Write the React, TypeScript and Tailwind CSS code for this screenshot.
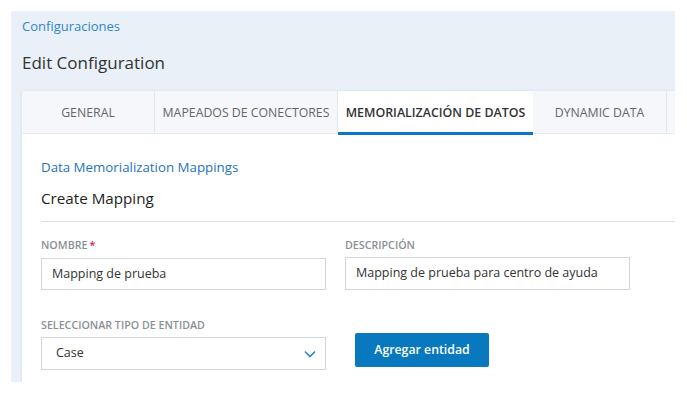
import React from "react";

const tabs = [
  { label: "GENERAL", w: "w-[133px]" },
  { label: "MAPEADOS DE CONECTORES", w: "w-[183px]" },
  { label: "MEMORIALIZACIÓN DE DATOS", w: "w-[195px]", active: true },
  { label: "DYNAMIC DATA", w: "w-[134px]" },
  { label: "", w: "w-[60px]" },
];

export default function App() {
  return (
    <div
      className="w-[687px] h-[410px] bg-white pt-[11px] pl-[11px] overflow-hidden"
      style={{ fontFamily: '"Open Sans", "Noto Sans", sans-serif' }}
    >
      <div className="w-[664px] h-[371px] overflow-hidden bg-[#eaf0f7] pl-[11px]">
        <div className="pt-[6px] text-[13px] leading-[18px] text-[#2f86cc]">Configuraciones</div>
        <div className="mt-[16px] text-[17px] leading-[24px] text-[#333]">Edit Configuration</div>
        <div className="mt-[16px] w-[700px] bg-white shadow-[0_0_3px_rgba(0,0,0,0.08)]">
          <div className="flex h-[43px] bg-[#f5f7fa] border-b border-[#e6eaef]">
            {tabs.map((t, i) => (
              <div
                key={i}
                className={
                  t.active
                    ? `${t.w} shrink-0 h-[44px] bg-white border-b-[3px] border-[#0a77c4] flex items-center justify-center text-[12.4px] font-semibold text-[#333] pt-[4px]`
                    : `${t.w} shrink-0 h-full border-r border-[#e3e8ee] flex items-center justify-center text-[12.3px] text-[#666] pt-[3px]`
                }
              >
                {t.label}
              </div>
            ))}
          </div>
          <div className="pl-[19px] pt-[23px] pb-[40px]">
            <div className="text-[13.3px] leading-[20px] text-[#1f74b9]">Data Memorialization Mappings</div>
            <div className="mt-[10px] text-[15.2px] leading-[22px] text-[#222]">Create Mapping</div>
            <div className="mt-[12px] h-px bg-[#dcdfe3]" />
            <div className="flex gap-[19px] mt-[16px]">
              <div className="w-[285px]">
                <div className="text-[10.7px] leading-[14px] font-semibold text-[#8a8f96] flex">
                  NOMBRE<span className="text-[#e0203a] ml-[2px]">*</span>
                </div>
                <div className="mt-[6px] h-[32px] border border-[#d3d7dc] flex items-center pl-[10px] text-[12.5px] text-[#333]">
                  Mapping de prueba
                </div>
              </div>
              <div className="w-[285px]">
                <div className="text-[10.7px] leading-[14px] font-semibold text-[#8a8f96]">DESCRIPCIÓN</div>
                <div className="mt-[5px] h-[33px] border border-[#d3d7dc] flex items-center pl-[10px] text-[12.5px] text-[#333]">
                  Mapping de prueba para centro de ayuda
                </div>
              </div>
            </div>
            <div className="flex gap-[29px] mt-[28px]">
              <div className="w-[285px]">
                <div className="text-[10.7px] leading-[14px] font-semibold text-[#8a8f96]">SELECCIONAR TIPO DE ENTIDAD</div>
                <div className="mt-[5px] h-[33px] border border-[#d3d7dc] flex items-center justify-between pl-[14px] pr-[9px] text-[12.5px] text-[#333]">
                  <span>Case</span>
                  <svg width="12" height="8" viewBox="0 0 12 8">
                    <path d="M1 1.5 L6 6.5 L11 1.5" fill="none" stroke="#2a86cc" strokeWidth="1.6" />
                  </svg>
                </div>
              </div>
              <div className="pt-[15px]">
                <div className="w-[134px] h-[34px] bg-[#0878bf] rounded-[2px] flex items-center justify-center text-white text-[12.3px] font-semibold">
                  Agregar entidad
                </div>
              </div>
            </div>
          </div>
        </div>
      </div>
    </div>
  );
}
